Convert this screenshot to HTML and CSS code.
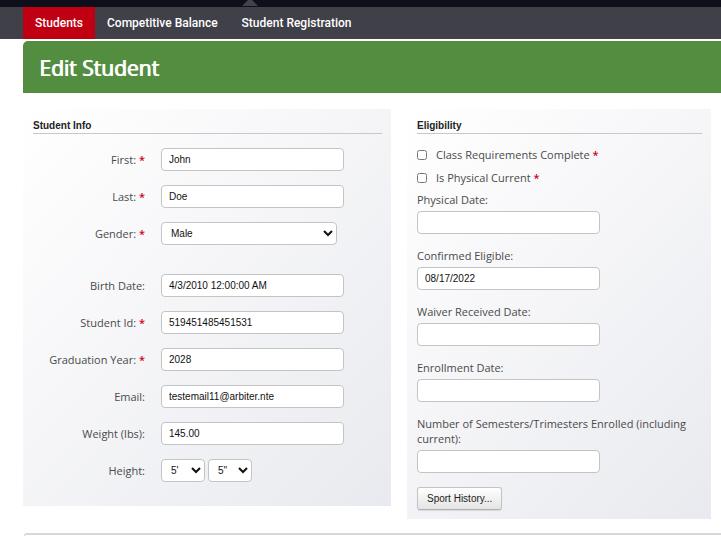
FILE: index.html
```html
<!DOCTYPE html>
<html lang="en">
  <head>
    <meta charset="UTF-8" />
    <meta name="viewport" content="width=device-width, initial-scale=1.0" />
    <title>Edit Student</title>
    <link rel="stylesheet" href="styles.css">
  </head>
  <body>
    <div class="topbar">
      <svg class="topbar-arrow" width="18" height="7" viewBox="0 0 18 7"><path d="M1 6 L9 -2 L17 6 Z" fill="#42424b" /></svg>
    </div>
    <nav class="nav">
      <a href="#" class="active">Students</a>
      <a href="#">Competitive Balance</a>
      <a href="#">Student Registration</a>
    </nav>

    <header class="page-title">
      <h1>Edit Student</h1>
    </header>

    <form class="panels">
      <!-- Student Info -->
      <section class="panel">
        <h2>Student Info</h2>
        <div class="rows">
          <div class="row">
            <label for="first">First: <span class="req">*</span></label>
            <input type="text" id="first" value="John" />
          </div>
          <div class="row">
            <label for="last">Last: <span class="req">*</span></label>
            <input type="text" id="last" value="Doe" />
          </div>
          <div class="row row-gender">
            <label for="gender">Gender: <span class="req">*</span></label>
            <select id="gender" class="select-wide">
              <option>Male</option>
              <option>Female</option>
            </select>
          </div>
          <div class="row">
            <label for="birth">Birth Date:</label>
            <input type="text" id="birth" value="4/3/2010 12:00:00 AM" />
          </div>
          <div class="row">
            <label for="studentId">Student Id: <span class="req">*</span></label>
            <input type="text" id="studentId" value="519451485451531" />
          </div>
          <div class="row">
            <label for="gradYear">Graduation Year: <span class="req">*</span></label>
            <input type="text" id="gradYear" value="2028" />
          </div>
          <div class="row">
            <label for="email">Email:</label>
            <input type="text" id="email" value="testemail11@arbiter.nte" />
          </div>
          <div class="row">
            <label for="weight">Weight (lbs):</label>
            <input type="text" id="weight" value="145.00" />
          </div>
          <div class="row">
            <label for="feet">Height:</label>
            <div class="height-fields">
              <select id="feet" class="select-small">
                <option>5'</option>
                <option>6'</option>
              </select>
              <select id="inches" class="select-small" aria-label="Inches">
                <option>5"</option>
                <option>6"</option>
              </select>
            </div>
          </div>
        </div>
      </section>

      <!-- Eligibility -->
      <section class="panel panel-eligibility">
        <h2>Eligibility</h2>
        <div class="checks">
          <label><input type="checkbox" /> <span>Class Requirements Complete <span class="req">*</span></span></label>
          <label><input type="checkbox" /> <span>Is Physical Current <span class="req">*</span></span></label>
        </div>
        <div class="stack">
          <div class="field">
            <label for="physicalDate">Physical Date:</label>
            <input type="text" id="physicalDate" />
          </div>
          <div class="field">
            <label for="confirmed">Confirmed Eligible:</label>
            <input type="text" id="confirmed" value="08/17/2022" />
          </div>
          <div class="field">
            <label for="waiver">Waiver Received Date:</label>
            <input type="text" id="waiver" />
          </div>
          <div class="field">
            <label for="enrollment">Enrollment Date:</label>
            <input type="text" id="enrollment" />
          </div>
          <div class="field">
            <label for="semesters">Number of Semesters/Trimesters Enrolled (including current):</label>
            <input type="text" id="semesters" />
          </div>
          <button type="button">Sport History...</button>
        </div>
      </section>
    </form>

    <div class="next-box"></div>
  </body>
</html>
```

FILE: styles.css
```css
* {
  margin: 0;
  padding: 0;
  box-sizing: border-box;
}

body {
  display: flex;
  flex-direction: column;
  min-height: 100vh;
  background: #fff;
  color: #4a4a4a;
  font-family: "Open Sans", sans-serif;
  font-size: 11px;
  line-height: 15px;
}

.topbar {
  position: relative;
  height: 7px;
  background: #0f0f1b;
}

.topbar-arrow {
  position: absolute;
  left: 241px;
  bottom: 0;
}

.nav {
  display: flex;
  padding-left: 23px;
  background: #404048;
}

.nav a {
  padding: 0 12px;
  color: #fff;
  font: 500 12px/32px Roboto, sans-serif;
  text-decoration: none;
}

.nav a.active {
  background: #c00012;
}

.page-title {
  margin: 2px 0 16px 23px;
  padding: 0 16px;
  background: #538d40;
  border-top-left-radius: 5px;
}

.page-title h1 {
  color: #fff;
  font-size: 21px;
  font-weight: 400;
  line-height: 54px;
  height: 52px;
  text-shadow: 1px 0 0 #fff;
}

.panels {
  display: grid;
  grid-template-columns: 368fr 304fr;
  align-items: start;
  gap: 16px;
  padding: 0 10px 0 23px;
}

.panel {
  padding: 9px 9px 24px 10px;
  background: linear-gradient(135deg, #fff 0%, #e9eaef 100%);
}

.panel-eligibility {
  padding-bottom: 9px;
}

.panel h2 {
  border-bottom: 1px solid #c8c8c8;
  color: #222;
  font: bold 10px/15px "Liberation Sans", Arial, sans-serif;
}

.rows {
  display: flex;
  flex-direction: column;
  gap: 14px;
  padding-top: 14px;
}

.row {
  display: grid;
  grid-template-columns: 112px 183px;
  align-items: center;
  gap: 16px;
}

.row > label {
  text-align: right;
}

.row-gender {
  margin-bottom: 15px;
}

.req {
  color: #d00018;
  font-weight: 600;
}

input[type="text"],
select {
  height: 23px;
  border: 1px solid #c4c4c4;
  border-radius: 4px;
  background-color: #fff;
  color: #111;
  font: 10px "Liberation Sans", Arial, sans-serif;
}

input[type="text"] {
  width: 183px;
  padding: 0 7px;
}

select {
  padding-left: 5px;
}

.select-wide {
  width: 176px;
}

.select-small {
  width: 44px;
}

.height-fields {
  display: flex;
  gap: 3px;
}

.checks {
  display: flex;
  flex-direction: column;
  gap: 8px;
  padding: 13px 0 7px;
}

.checks label {
  display: flex;
  align-items: center;
  gap: 9px;
}

.checks input {
  width: 10px;
  height: 10px;
}

.stack {
  display: flex;
  flex-direction: column;
  align-items: flex-start;
  gap: 14px;
}

.field {
  display: flex;
  flex-direction: column;
  gap: 4px;
}

button {
  height: 23px;
  padding: 0 9px;
  border: 1px solid #c4c4c4;
  border-bottom-color: #b0b0b0;
  border-radius: 3px;
  background: linear-gradient(#fff, #e4e4e4);
  box-shadow: 0 1px 1px rgba(0, 0, 0, 0.1);
  color: #222;
  font: 10px "Liberation Sans", Arial, sans-serif;
}

.next-box {
  flex: 1;
  margin: 14px 0 0 24px;
  border: 1px solid #d8d8d8;
  border-width: 2px 0 0 1px;
  border-top-left-radius: 4px;
}
```
